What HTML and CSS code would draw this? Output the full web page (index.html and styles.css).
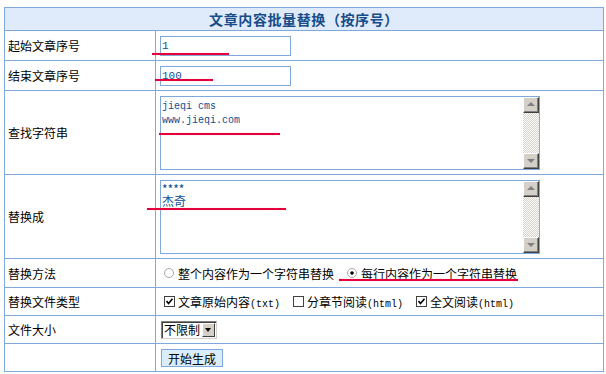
FILE: index.html
```html
<html>

<head>
    <meta charset="UTF-8">
    <meta name="viewport" content="width=device-width, initial-scale=1.0">
    <title>文章内容批量替换</title>
    <link rel="stylesheet" href="styles.css">
</head>

<body>
    <div class="page">
        <div class="panel">
            <div class="head">文章内容批量替换（按序号）</div>

            <div class="label">起始文章序号</div>
            <div class="field"><input class="text" type="text" value="1"></div>

            <div class="label">结束文章序号</div>
            <div class="field"><input class="text" type="text" value="100"></div>

            <div class="label">查找字符串</div>
            <div class="field top">
                <div class="memo">
                    <textarea class="find">jieqi cms
www.jieqi.com</textarea>
                    <div class="vbar"><span class="sbtn up"></span><span class="track"></span><span class="sbtn down"></span></div>
                </div>
            </div>

            <div class="label">替换成</div>
            <div class="field top">
                <div class="memo">
                    <textarea class="repl">****
杰奇</textarea>
                    <div class="vbar"><span class="sbtn up"></span><span class="track"></span><span class="sbtn down"></span></div>
                </div>
            </div>

            <div class="label">替换方法</div>
            <div class="field">
                <label class="opt">
                    <svg class="radio" width="12" height="12" viewBox="0 0 12 12"><circle cx="6" cy="6" r="4.5" fill="#fff" stroke="#a8a8a8"/></svg>
                    <span>整个内容作为一个字符串替换</span>
                </label>
                <label class="opt">
                    <svg class="radio" width="12" height="12" viewBox="0 0 12 12"><circle cx="6" cy="6" r="4.5" fill="#fff" stroke="#a8a8a8"/><circle cx="6" cy="6" r="1.8" fill="#000"/></svg>
                    <span>每行内容作为一个字符串替换</span>
                </label>
            </div>

            <div class="label">替换文件类型</div>
            <div class="field types">
                <label class="opt">
                    <svg class="check" width="11" height="11" viewBox="0 0 11 11"><rect x="0.5" y="0.5" width="10" height="10" fill="#fff" stroke="#404040"/><polyline points="2.5,5 4.5,7.5 8.5,2.8" fill="none" stroke="#000" stroke-width="1.6"/></svg>
                    <span>文章原始内容<span class="mono">(txt)</span></span>
                </label>
                <label class="opt">
                    <svg class="check" width="11" height="11" viewBox="0 0 11 11"><rect x="0.5" y="0.5" width="10" height="10" fill="#fff" stroke="#404040"/></svg>
                    <span>分章节阅读<span class="mono">(html)</span></span>
                </label>
                <label class="opt">
                    <svg class="check" width="11" height="11" viewBox="0 0 11 11"><rect x="0.5" y="0.5" width="10" height="10" fill="#fff" stroke="#404040"/><polyline points="2.5,5 4.5,7.5 8.5,2.8" fill="none" stroke="#000" stroke-width="1.6"/></svg>
                    <span>全文阅读<span class="mono">(html)</span></span>
                </label>
            </div>

            <div class="label">文件大小</div>
            <div class="field">
                <div class="combo"><span class="value">不限制</span><span class="drop"></span></div>
            </div>

            <div class="label"></div>
            <div class="field"><button class="go" type="button">开始生成</button></div>
        </div>

        <!-- red marks drawn on the screenshot -->
        <span class="mark m1"></span>
        <span class="mark m2"></span>
        <span class="mark m3"></span>
        <span class="mark m4"></span>
        <span class="mark m5"></span>
    </div>
</body>

</html>
```

FILE: styles.css
```css
body {
    margin: 0;
    font-family: "Noto Sans CJK SC", sans-serif;
    font-size: 12px;
    color: #000;
    background-color: #fff;
}

.page {
    position: relative;
    padding: 7px 0 0 4px;
}

.panel {
    display: grid;
    grid-template-columns: 150px 447px;
    grid-template-rows: 22px 29px 29px 83px 83px 28px 27px 27px 27px;
    gap: 1px;
    padding: 1px;
    width: 600px;
    box-sizing: border-box;
    background-color: #7fa9dc;
}

.head {
    grid-column: 1 / -1;
    display: flex;
    justify-content: center;
    align-items: center;
    background-color: #dfeafb;
    color: #164c89;
    font-size: 14px;
    font-weight: bold;
    letter-spacing: 0.6px;
}

.label,
.field {
    display: flex;
    align-items: center;
    background-color: #fff;
}

.label {
    padding-left: 3px;
}

.field {
    padding-left: 4px;
}

.field.top {
    align-items: flex-start;
    padding-top: 5px;
}

input.text {
    width: 131px;
    height: 20px;
    box-sizing: border-box;
    margin: 0;
    padding: 0 1px;
    border: 1px solid #7fa9dc;
    font-family: "Liberation Mono", monospace;
    font-size: 11px;
    color: #0b4f91;
    outline: none;
}

.memo {
    display: flex;
    width: 380px;
    height: 74px;
    box-sizing: border-box;
    border: 1px solid #7fa9dc;
    background-color: #fff;
}

.memo textarea {
    flex: 1;
    border: none;
    resize: none;
    outline: none;
    margin: 0;
    padding: 2px 1px 0;
    overflow: hidden;
    color: #0b4f91;
}

textarea.find {
    font-family: "Liberation Mono", monospace;
    font-size: 10px;
    line-height: 14px;
    padding-top: 3px;
}

textarea.repl {
    font-family: "Noto Sans CJK SC", sans-serif;
    font-size: 12px;
    line-height: 12px;
    padding-top: 2px;
}

.vbar {
    display: flex;
    flex-direction: column;
    width: 16px;
}

.sbtn {
    position: relative;
    height: 16px;
    box-sizing: border-box;
    background-color: #d4d0c8;
    border: 1px solid;
    border-color: #fff #404040 #404040 #fff;
    box-shadow: inset -1px -1px 0 #808080;
}

.sbtn::after {
    content: "";
    position: absolute;
    left: 3px;
    width: 0;
    height: 0;
    border-left: 4px solid transparent;
    border-right: 4px solid transparent;
}

.sbtn.up::after {
    top: 4px;
    border-bottom: 4px solid #808080;
}

.sbtn.down::after {
    top: 5px;
    border-top: 4px solid #808080;
}

.track {
    flex: 1;
    background: repeating-conic-gradient(#d4d0c8 0 25%, #fff 0 50%) 0 0 / 2px 2px;
}

.opt {
    display: flex;
    align-items: center;
    margin-right: 9px;
}

.radio {
    margin: 0 3px 0 3px;
}

.check {
    margin: 0 3px 0 4px;
}

.mono {
    font-family: "Liberation Mono", monospace;
    font-size: 10px;
}

.combo {
    display: flex;
    align-items: center;
    width: 56px;
    height: 18px;
    box-sizing: border-box;
    margin-left: 1px;
    border: 1px solid;
    border-color: #808080 #d4d0c8 #d4d0c8 #808080;
    box-shadow: inset 1px 1px 0 #404040;
    background-color: #fff;
}

.combo .value {
    flex: 1;
    padding-left: 2px;
}

.combo .drop {
    position: relative;
    width: 13px;
    height: 14px;
    margin-right: 1px;
    box-sizing: border-box;
    background-color: #d4d0c8;
    border: 1px solid;
    border-color: #fff #404040 #404040 #fff;
}

.combo .drop::after {
    content: "";
    position: absolute;
    left: 2px;
    top: 4px;
    border-left: 3.5px solid transparent;
    border-right: 3.5px solid transparent;
    border-top: 4px solid #000;
}

button.go {
    width: 62px;
    height: 18px;
    margin: 0 0 0 1px;
    padding: 0;
    border: 1px solid #7fa9dc;
    background-color: #d9edfd;
    font-family: "Noto Sans CJK SC", sans-serif;
    font-size: 12px;
    color: #000;
    cursor: pointer;
}

.mark {
    position: absolute;
    height: 2px;
    background-color: #e5003c;
    box-shadow: 0 0 1px #f6a2b6;
}

.m1 { left: 152px; top: 53px; width: 77px; }
.m2 { left: 155px; top: 79px; width: 58px; }
.m3 { left: 159px; top: 133px; width: 121px; }
.m4 { left: 147px; top: 208px; width: 139px; }
.m5 { left: 339px; top: 279px; width: 179px; }
```
